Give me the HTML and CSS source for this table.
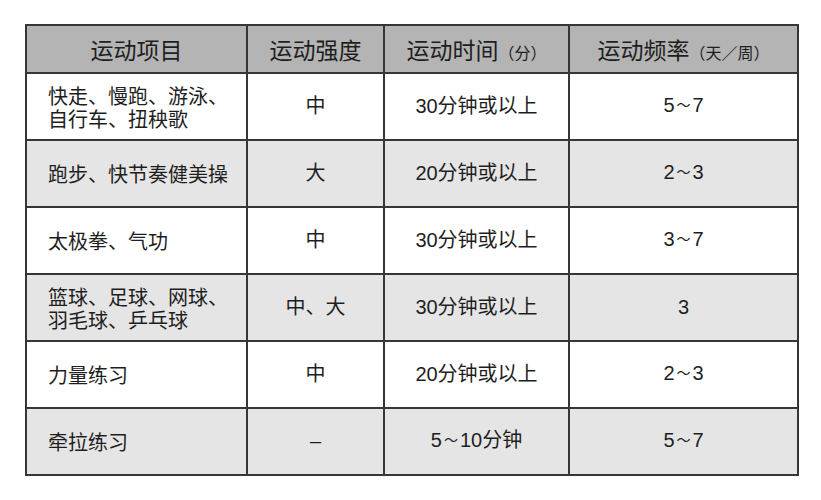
FILE: index.html
```html
<!DOCTYPE html>
<html lang="zh">
<head>
<meta charset="utf-8">
<link rel="stylesheet" href="styles.css">
</head>
<body>
<div class="page">
<table class="tbl">
  <colgroup>
    <col class="c1"><col class="c2"><col class="c3"><col class="c4">
  </colgroup>
  <thead>
    <tr class="head">
      <th>运动项目</th>
      <th>运动强度</th>
      <th>运动时间<span class="sm">（分）</span></th>
      <th>运动频率<span class="sm">（天／周）</span></th>
    </tr>
  </thead>
  <tbody>
    <tr class="odd">
      <td class="name">快走、慢跑、游泳、<br>自行车、扭秧歌</td>
      <td>中</td>
      <td>30分钟或以上</td>
      <td>5<span class="tl">～</span>7</td>
    </tr>
    <tr class="even">
      <td class="name">跑步、快节奏健美操</td>
      <td>大</td>
      <td>20分钟或以上</td>
      <td>2<span class="tl">～</span>3</td>
    </tr>
    <tr class="odd">
      <td class="name">太极拳、气功</td>
      <td>中</td>
      <td>30分钟或以上</td>
      <td>3<span class="tl">～</span>7</td>
    </tr>
    <tr class="even">
      <td class="name">篮球、足球、网球、<br>羽毛球、乒乓球</td>
      <td>中、大</td>
      <td>30分钟或以上</td>
      <td>3</td>
    </tr>
    <tr class="odd">
      <td class="name">力量练习</td>
      <td>中</td>
      <td>20分钟或以上</td>
      <td>2<span class="tl">～</span>3</td>
    </tr>
    <tr class="even">
      <td class="name">牵拉练习</td>
      <td>–</td>
      <td>5<span class="tl">～</span>10分钟</td>
      <td>5<span class="tl">～</span>7</td>
    </tr>
  </tbody>
</table>
</div>
</body>
</html>
```
FILE: styles.css
```css
html, body {
  margin: 0;
  padding: 0;
  background: #ffffff;
}
.page {
  padding: 24px 0 0 25px;
}
.tbl {
  border-collapse: collapse;
  table-layout: fixed;
  width: 772px;
  font-family: "Liberation Sans", "Noto Sans CJK SC", sans-serif;
  color: #1e1e1e;
}
.c1 { width: 221px; }
.c2 { width: 137px; }
.c3 { width: 185px; }
.c4 { width: 229px; }
.tbl th, .tbl td {
  border: 2px solid #363636;
  text-align: center;
  vertical-align: middle;
  padding: 0;
}
.tbl th {
  font-weight: normal;
  font-size: 23px;
  height: 46px;
  background: #b4b4b4;
  font-family: "Noto Sans CJK SC", sans-serif;
}
.tbl td {
  font-size: 20px;
  height: 65px;
  line-height: 23px;
}
.tbl td.name {
  text-align: left;
  padding-left: 21px;
  font-family: "Noto Sans CJK SC", sans-serif;
}
.sm {
  font-size: 16px;
}
.tl {
  font-size: 14px;
  padding: 0 2px;
  position: relative;
  top: -2px;
}
.odd td { background: #ffffff; }
.even td { background: #e5e5e5; }
```
